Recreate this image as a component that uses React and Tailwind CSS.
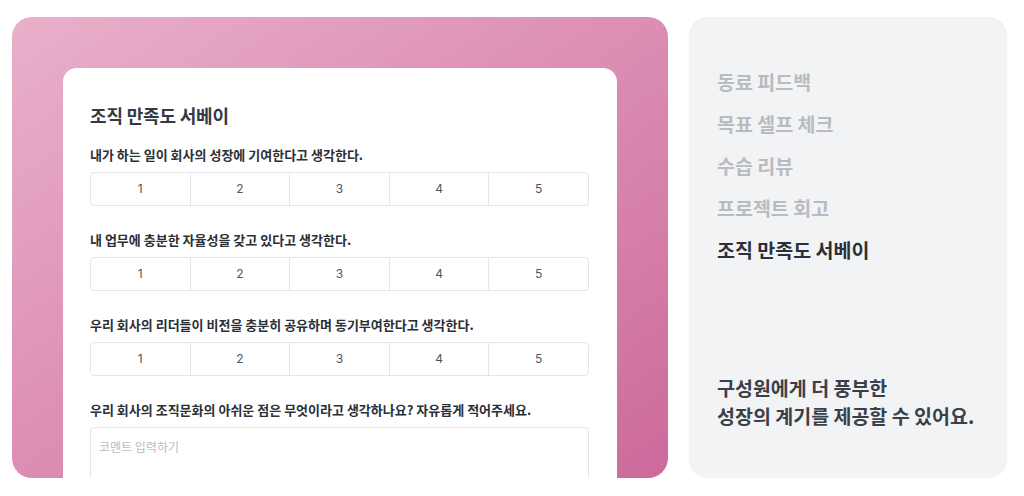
import React from "react";

const FONT = { fontFamily: '"Noto Sans CJK KR", "Noto Sans", sans-serif' };

function Rating() {
  return (
    <div className="flex h-[34px] w-full rounded-[4px] border border-[#e3e5e8]">
      {[1, 2, 3, 4, 5].map((n, i) => (
        <div
          key={n}
          className={
            "flex flex-1 items-center justify-center text-[12px] text-[#50555d] " +
            (i > 0 ? "border-l border-[#e3e5e8]" : "")
          }
          style={{ fontFamily: 'Inter, "Noto Sans CJK KR", sans-serif' }}
        >
          {n}
        </div>
      ))}
    </div>
  );
}

function Question({ label, children }) {
  return (
    <div className="mb-[25px]">
      <div className="mb-[8px] h-[18px] text-[13px] leading-[18px] font-semibold text-[#2b2f36]">
        {label}
      </div>
      {children}
    </div>
  );
}

export default function App() {
  const items = ["동료 피드백", "목표 셀프 체크", "수습 리뷰", "프로젝트 회고"];
  return (
    <div
      className="flex h-[496px] w-[1024px] gap-[21px] bg-white pl-[12px] pt-[17px] pb-[18px]"
      style={FONT}
    >
      <div className="h-full w-[656px] overflow-hidden rounded-[20px] bg-gradient-to-br from-[#e9b0ca] to-[#cc6a9b] pl-[51px] pt-[51px]">
        <div className="h-[600px] w-[554px] rounded-t-[14px] bg-white pl-[27px] pr-[28px] pt-[33px]">
          <div className="mb-[17px] h-[28px] text-[18px] leading-[28px] font-bold tracking-[-0.01em] text-[#343a44]">
            조직 만족도 서베이
          </div>
          <Question label="내가 하는 일이 회사의 성장에 기여한다고 생각한다.">
            <Rating />
          </Question>
          <Question label="내 업무에 충분한 자율성을 갖고 있다고 생각한다.">
            <Rating />
          </Question>
          <Question label="우리 회사의 리더들이 비전을 충분히 공유하며 동기부여한다고 생각한다.">
            <Rating />
          </Question>
          <Question label="우리 회사의 조직문화의 아쉬운 점은 무엇이라고 생각하나요? 자유롭게 적어주세요.">
            <div className="h-[100px] w-full rounded-[4px] border border-[#e3e5e8] px-[8px] pt-[9px] text-[12px] leading-[20px] text-[#b9bcc1]">
              코멘트 입력하기
            </div>
          </Question>
        </div>
      </div>
      <div className="flex h-full w-[318px] flex-col justify-between rounded-[18px] bg-[#f2f3f5] pl-[28px] pt-[44px] pb-[48px]">
        <div>
          {items.map((t) => (
            <div
              key={t}
              className="h-[42px] text-[19.5px] leading-[42px] font-bold text-[#b8bbc0]"
            >
              {t}
            </div>
          ))}
          <div className="h-[42px] text-[19.5px] leading-[42px] font-bold text-[#2c3038]">
            조직 만족도 서베이
          </div>
        </div>
        <div className="text-[19.5px] leading-[28px] font-bold text-[#3b4048]">
          구성원에게 더 풍부한
          <br />
          성장의 계기를 제공할 수 있어요.
        </div>
      </div>
    </div>
  );
}
